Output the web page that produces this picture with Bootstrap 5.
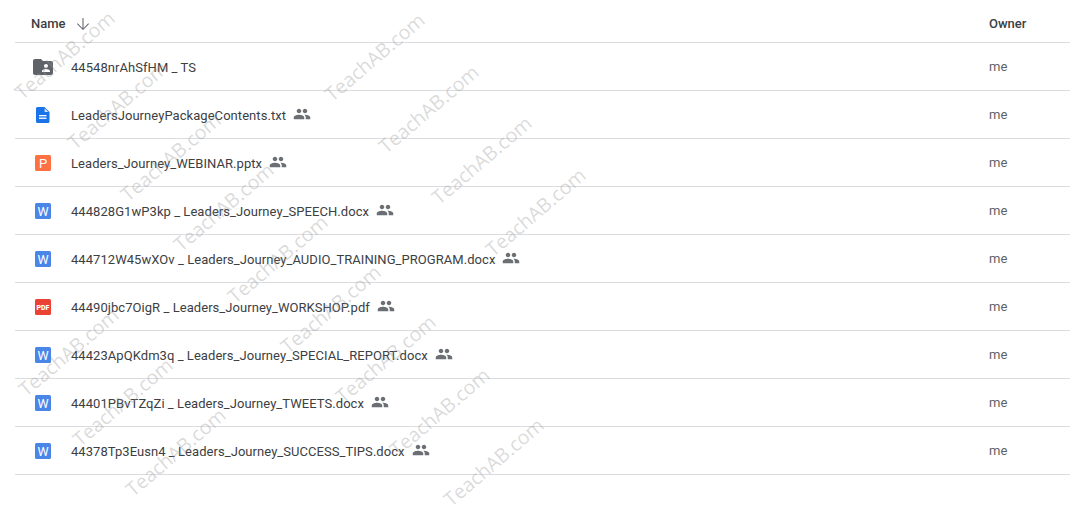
<!DOCTYPE html>
<html lang="en">
<head>
<meta charset="utf-8">
<title>Drive folder</title>
<link href="https://cdn.jsdelivr.net/npm/bootstrap@5.3.0/dist/css/bootstrap.min.css" rel="stylesheet">
<style>
html, body { height: 510px; overflow: hidden; }
body { font-family: Roboto, "Liberation Sans", sans-serif; font-size: 13px; background: #fff; color: #3c4043; position: relative; }
.file-list { margin-left: 15px; }
.head-row { height: 43px; border-bottom: 1px solid #dadce0; font-weight: 500; padding: 6px 0 0 16px; }
.file-row { height: 48px; border-bottom: 1px solid #dadce0; font-weight: 450; }
.file-name { padding-top: 2px; letter-spacing: .055px; }
.icon-cell { width: 56px; flex: none; }
.owner-cell { width: 81px; flex: none; }
.owner-val { color: #5f6368; font-weight: 400; }
.sort-arrow { margin-left: 8px; fill: #5f6368; }
.people { margin-left: 7px; fill: #6b6f73; margin-top: -2px; flex: none; }
.head-owner { margin-left: auto; }
.ic-letter { font-family: Roboto, "Liberation Sans", sans-serif; fill: #fff; text-anchor: middle; }
.wm { position: absolute; font-family: "Open Sans", "Liberation Sans", sans-serif; font-size: 19.6px; line-height: 1; color: rgba(150,150,150,.35); transform-origin: 0 100%; transform: rotate(-40.5deg); white-space: nowrap; pointer-events: none; }
</style>
</head>
<body>
<svg width="0" height="0" class="d-block position-absolute">
  <defs>
    <symbol id="ic-people" viewBox="0 0 24 24"><path d="M16 11c1.66 0 2.99-1.34 2.99-3S17.66 5 16 5c-1.66 0-3 1.34-3 3s1.34 3 3 3zm-8 0c1.66 0 2.99-1.34 2.99-3S9.66 5 8 5C6.34 5 5 6.34 5 8s1.34 3 3 3zm0 2c-2.33 0-7 1.17-7 3.5V19h14v-2.5c0-2.33-4.67-3.5-7-3.5zm8 0c-.29 0-.62.02-.97.05 1.16.84 1.97 1.97 1.97 3.45V19h6v-2.5c0-2.33-4.67-3.5-7-3.5z"/></symbol>
    <symbol id="ic-word" viewBox="0 0 16 16"><rect width="16" height="16" rx="1.5" fill="#4a86e8"/><text x="8" y="12.6" font-size="12.5" class="ic-letter">W</text></symbol>
  </defs>
</svg>

<main class="file-list">
  <div class="head-row d-flex align-items-center">
    <span>Name</span>
    <svg class="sort-arrow" width="18" height="18" viewBox="0 0 24 24"><path d="M20 12l-.9-.9L12.7 17.5V4h-1.4v13.5L4.9 11.1 4 12l8 8 8-8z"/></svg>
    <span class="owner-cell head-owner">Owner</span>
  </div>

  <div class="file-row d-flex align-items-center">
    <div class="icon-cell d-flex justify-content-center"><svg width="24" height="24" viewBox="0 0 24 24" fill="#5f6368"><path d="M20 6h-8l-2-2H4c-1.1 0-1.99.9-1.99 2L2 18c0 1.1.9 2 2 2h16c1.1 0 2-.9 2-2V8c0-1.1-.9-2-2-2zm-5 3c1.1 0 2 .9 2 2s-.9 2-2 2-2-.9-2-2 .9-2 2-2zm4 8h-8v-1c0-1.33 2.67-2 4-2s4 .67 4 2v1z"/></svg></div>
    <span class="file-name">44548nrAhSfHM _ TS</span>
    <span class="owner-cell owner-val ms-auto">me</span>
  </div>

  <div class="file-row d-flex align-items-center">
    <div class="icon-cell d-flex justify-content-center"><svg width="14" height="16" viewBox="0 0 14 16"><path fill="#1a73e8" d="M1.5 0H8.5L13.5 5V14.5a1.5 1.5 0 0 1-1.5 1.5H1.5A1.5 1.5 0 0 1 0 14.5V1.5A1.5 1.5 0 0 1 1.5 0z"/><path fill="#cfe0fb" d="M8.6 1.2V5H12.4z"/><rect x="3" y="8" width="7.5" height="1.3" fill="#fff"/><rect x="3" y="10.6" width="7.5" height="1.3" fill="#fff"/></svg></div>
    <span class="file-name">LeadersJourneyPackageContents.txt</span>
    <svg class="people" width="18" height="18"><use href="#ic-people"/></svg>
    <span class="owner-cell owner-val ms-auto">me</span>
  </div>

  <div class="file-row d-flex align-items-center">
    <div class="icon-cell d-flex justify-content-center"><svg width="16" height="16" viewBox="0 0 16 16"><rect width="16" height="16" rx="1.5" fill="#ff7043"/><text x="8" y="12.6" font-size="13" class="ic-letter">P</text></svg></div>
    <span class="file-name">Leaders_Journey_WEBINAR.pptx</span>
    <svg class="people" width="18" height="18"><use href="#ic-people"/></svg>
    <span class="owner-cell owner-val ms-auto">me</span>
  </div>

  <div class="file-row d-flex align-items-center">
    <div class="icon-cell d-flex justify-content-center"><svg width="16" height="16"><use href="#ic-word"/></svg></div>
    <span class="file-name">444828G1wP3kp _ Leaders_Journey_SPEECH.docx</span>
    <svg class="people" width="18" height="18"><use href="#ic-people"/></svg>
    <span class="owner-cell owner-val ms-auto">me</span>
  </div>

  <div class="file-row d-flex align-items-center">
    <div class="icon-cell d-flex justify-content-center"><svg width="16" height="16"><use href="#ic-word"/></svg></div>
    <span class="file-name">444712W45wXOv _ Leaders_Journey_AUDIO_TRAINING_PROGRAM.docx</span>
    <svg class="people" width="18" height="18"><use href="#ic-people"/></svg>
    <span class="owner-cell owner-val ms-auto">me</span>
  </div>

  <div class="file-row d-flex align-items-center">
    <div class="icon-cell d-flex justify-content-center"><svg width="16" height="16" viewBox="0 0 16 16"><rect width="16" height="16" rx="1.5" fill="#ea4335"/><text x="8" y="10.6" font-size="7" font-weight="900" class="ic-letter">PDF</text></svg></div>
    <span class="file-name">44490jbc7OigR _ Leaders_Journey_WORKSHOP.pdf</span>
    <svg class="people" width="18" height="18"><use href="#ic-people"/></svg>
    <span class="owner-cell owner-val ms-auto">me</span>
  </div>

  <div class="file-row d-flex align-items-center">
    <div class="icon-cell d-flex justify-content-center"><svg width="16" height="16"><use href="#ic-word"/></svg></div>
    <span class="file-name">44423ApQKdm3q _ Leaders_Journey_SPECIAL_REPORT.docx</span>
    <svg class="people" width="18" height="18"><use href="#ic-people"/></svg>
    <span class="owner-cell owner-val ms-auto">me</span>
  </div>

  <div class="file-row d-flex align-items-center">
    <div class="icon-cell d-flex justify-content-center"><svg width="16" height="16"><use href="#ic-word"/></svg></div>
    <span class="file-name">44401PBvTZqZi _ Leaders_Journey_TWEETS.docx</span>
    <svg class="people" width="18" height="18"><use href="#ic-people"/></svg>
    <span class="owner-cell owner-val ms-auto">me</span>
  </div>

  <div class="file-row d-flex align-items-center">
    <div class="icon-cell d-flex justify-content-center"><svg width="16" height="16"><use href="#ic-word"/></svg></div>
    <span class="file-name">44378Tp3Eusn4 _ Leaders_Journey_SUCCESS_TIPS.docx</span>
    <svg class="people" width="18" height="18"><use href="#ic-people"/></svg>
    <span class="owner-cell owner-val ms-auto">me</span>
  </div>
</main>

<div id="marks"></div>
<script>
[[14,98],[67,148],[120,200],[173,250],[227,302],[280,352],[335,402],[389,455],[443,505],
 [324,100],[378,152],[431,203],[485,255],
 [18,395],[72,445],[125,495]].forEach(function(p){
  var s=document.createElement('span');s.className='wm';s.textContent='TeachAB.com';
  s.style.left=(p[0]+10)+'px';s.style.top=(p[1]-20+5)+'px';
  document.getElementById('marks').appendChild(s);
});
</script>
<script src="https://cdn.jsdelivr.net/npm/bootstrap@5.3.0/dist/js/bootstrap.bundle.min.js"></script>
</body>
</html>
